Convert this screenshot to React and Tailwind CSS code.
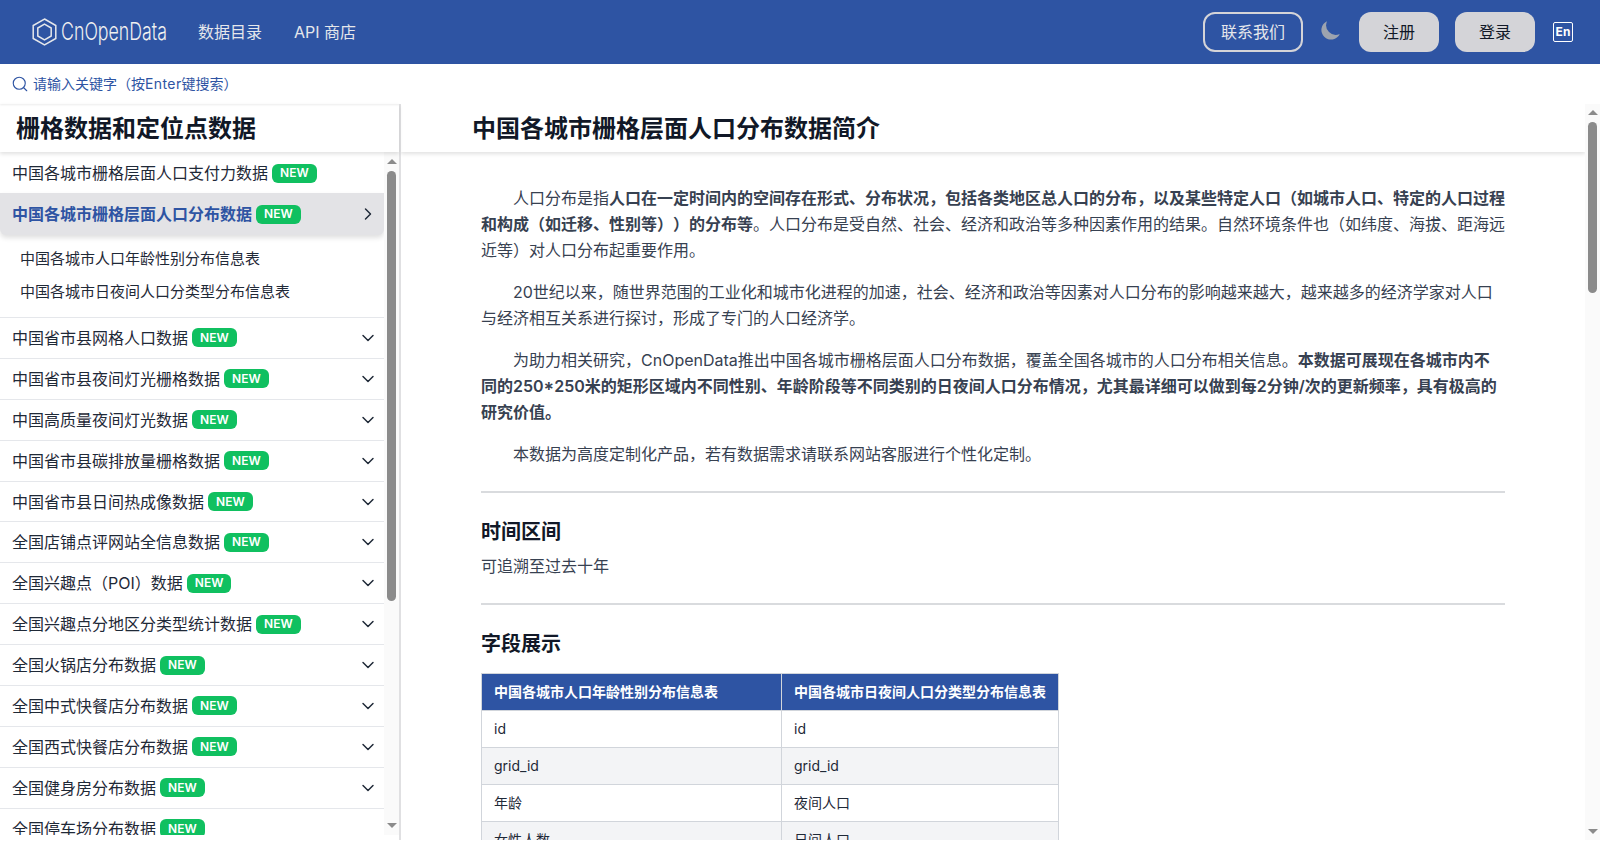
import React from "react";
import { ChevronDown, ChevronRight, Search } from "lucide-react";

const FONT = 'font-["Inter","Noto_Sans_CJK_SC",sans-serif]';

function New() {
  return (
    <span className="ml-1 inline-flex h-[19px] items-center rounded-md bg-[#10c060] px-2 text-xs font-semibold leading-none text-white">
      NEW
    </span>
  );
}

const rows = [
  "中国省市县网格人口数据",
  "中国省市县夜间灯光栅格数据",
  "中国高质量夜间灯光数据",
  "中国省市县碳排放量栅格数据",
  "中国省市县日间热成像数据",
  "全国店铺点评网站全信息数据",
  "全国兴趣点（POI）数据",
  "全国兴趣点分地区分类型统计数据",
  "全国火锅店分布数据",
  "全国中式快餐店分布数据",
  "全国西式快餐店分布数据",
  "全国健身房分布数据",
];

function Row({ label, chevron = true }) {
  return (
    <div className="flex h-[40.9px] shrink-0 items-center justify-between border-b border-[#e5e7eb] pl-3 pr-[6px] text-[#1f2937]">
      <span className="flex items-center">
        {label}
        <New />
      </span>
      {chevron && <ChevronDown size={20} strokeWidth={1.75} className="text-[#1f2937]" />}
    </div>
  );
}

function Arrow({ down }) {
  return (
    <svg width="10" height="5" viewBox="0 0 10 5" fill="#8b8b8b" className="shrink-0">
      <path d={down ? "M0 0h10L5 5Z" : "M5 0 10 5H0Z"} />
    </svg>
  );
}

function Scrollbar({ thumb, top, bottom }) {
  return (
    <div className={`flex w-[15px] shrink-0 flex-col items-center bg-[#fafafa] ${top}`}>
      <Arrow />
      <div className={`mt-[7px] w-[9px] rounded-full bg-[#8b8b8b] ${thumb}`} />
      <div className={`mt-auto ${bottom}`}>
        <Arrow down />
      </div>
    </div>
  );
}

function Sidebar() {
  return (
    <aside className="flex w-[401px] shrink-0 flex-col border-r-2 border-[#e0e0e2]">
      <div className="z-10 flex h-[48px] shrink-0 items-center pl-4 pt-[2px] text-2xl font-bold text-[#111827] shadow-[0_2px_4px_rgba(0,0,0,0.12)]">
        栅格数据和定位点数据
      </div>
      <div className="flex h-[683px] shrink-0">
        <div className="min-w-0 flex-1 overflow-hidden pt-[1px] text-base">
          <div className="flex h-[40px] items-center pl-3 text-[#1f2937]">
            <span className="flex items-center">
              中国各城市栅格层面人口支付力数据
              <New />
            </span>
          </div>
          <div className="flex h-[42px] items-center justify-between rounded-b-md bg-[#e3e3e6] pl-3 pr-[6px] font-semibold text-[#2e54a3] shadow-[0_3px_5px_rgba(0,0,0,0.12)]">
            <span className="flex items-center">
              中国各城市栅格层面人口分布数据
              <New />
            </span>
            <ChevronRight size={20} strokeWidth={1.75} className="text-[#1f2937]" />
          </div>
          <div className="border-b border-[#e5e7eb] pb-[9px] pl-5 pt-2 text-[15px] text-[#1f2937]">
            <div className="flex h-[32px] items-center">中国各城市人口年龄性别分布信息表</div>
            <div className="mt-[1px] flex h-[32px] items-center">中国各城市日夜间人口分类型分布信息表</div>
          </div>
          {rows.map((r) => (
            <Row key={r} label={r} />
          ))}
          <Row label="全国停车场分布数据" chevron={false} />
        </div>
        <Scrollbar top="pt-[7px]" thumb="h-[430px]" bottom="mb-[7px]" />
      </div>
    </aside>
  );
}

const tableRows = [
  ["id", "id"],
  ["grid_id", "grid_id"],
  ["年龄", "夜间人口"],
  ["女性人数", "日间人口"],
];

function Main() {
  return (
    <main className="flex min-w-0 flex-1">
      <div className="min-w-0 flex-1 overflow-hidden">
        <div className="z-10 flex h-[48px] items-center bg-white pl-[71px] pt-[2px] text-2xl font-bold text-[#111827] shadow-[0_2px_4px_rgba(0,0,0,0.12)]">
          中国各城市栅格层面人口分布数据简介
        </div>
        <article className="mx-auto w-[1024px] pt-[33px] text-base leading-[26px] text-[#374151]">
          <p className="mb-4 mr-[-2px] indent-8">
            人口分布是指<b className="font-semibold">人口在一定时间内的空间存在形式、分布状况，包括各类地区总人口的分布，以及某些特定人口（如城市人口、特定的人口过程和构成（如迁移、性别等））的分布等</b>。人口分布是受自然、社会、经济和政治等多种因素作用的结果。自然环境条件也（如纬度、海拔、距海远近等）对人口分布起重要作用。
          </p>
          <p className="mb-4 indent-8">
            20世纪以来，随世界范围的工业化和城市化进程的加速，社会、经济和政治等因素对人口分布的影响越来越大，越来越多的经济学家对人口与经济相互关系进行探讨，形成了专门的人口经济学。
          </p>
          <p className="mb-4 indent-8">
            为助力相关研究，CnOpenData推出中国各城市栅格层面人口分布数据，覆盖全国各城市的人口分布相关信息。<b className="font-semibold">本数据可展现在各城市内不同的250*250米的矩形区域内不同性别、年龄阶段等不同类别的日夜间人口分布情况，尤其最详细可以做到每2分钟/次的更新频率，具有极高的研究价值。</b>
          </p>
          <p className="mb-4 indent-8">本数据为高度定制化产品，若有数据需求请联系网站客服进行个性化定制。</p>
          <hr className="mt-6 border-t-2 border-[#d9dbde]" />
          <h3 className="mt-[25px] text-xl font-semibold leading-7 text-[#111827]">时间区间</h3>
          <p className="mt-[7px]">可追溯至过去十年</p>
          <hr className="mt-6 border-t-2 border-[#d9dbde]" />
          <h3 className="mt-[25px] text-xl font-semibold leading-7 text-[#111827]">字段展示</h3>
          <table className="mt-[15px] border-collapse text-sm leading-5">
            <thead>
              <tr className="bg-[#2e54a3] text-left font-bold text-white">
                <th className="h-[37px] w-[300px] border border-[#d1d5db] px-3">中国各城市人口年龄性别分布信息表</th>
                <th className="h-[37px] border border-[#d1d5db] px-3">中国各城市日夜间人口分类型分布信息表</th>
              </tr>
            </thead>
            <tbody>
              {tableRows.map(([a, b], i) => (
                <tr key={a} className={i % 2 === 1 ? "bg-[#f3f4f6]" : "bg-white"}>
                  <td className="h-[37px] border border-[#d1d5db] px-3 text-[#1f2937]">{a}</td>
                  <td className="h-[37px] border border-[#d1d5db] px-3 text-[#1f2937]">{b}</td>
                </tr>
              ))}
            </tbody>
          </table>
        </article>
      </div>
      <Scrollbar top="pt-[6px]" thumb="h-[171px]" bottom="mb-[6px]" />
    </main>
  );
}

export default function App() {
  return (
    <div className={`flex h-[840px] flex-col overflow-hidden bg-white [text-spacing-trim:space-all] ${FONT}`}>
      <header className="flex h-16 shrink-0 items-center bg-[#2e54a3] pl-8 pr-[27px] text-white">
        <svg width="25" height="28" viewBox="0 0 25 28" fill="none" stroke="#e5e7eb" strokeWidth="1.5" className="shrink-0">
          <path d="M12.5 1 23.8 7.5v13L12.5 27 1.2 20.5v-13Z" />
          <path d="M12.5 6.2 19.2 10v8l-6.7 3.8L5.8 18v-8Z" />
        </svg>
        <span className="ml-[4px] w-[107px] origin-left scale-x-[0.74] whitespace-nowrap text-2xl font-light leading-none text-[#f0f0f0]">CnOpenData</span>
        <nav className="ml-[30px] flex gap-8 text-base text-[#e5e7eb]">
          <span>数据目录</span>
          <span>API 商店</span>
        </nav>
        <div className="ml-auto flex items-center">
          <button className="h-10 w-[100px] rounded-xl border-2 border-[#d4d4d8] text-base text-[#e5e7eb]">联系我们</button>
          <svg width="24" height="24" viewBox="0 0 20 20" fill="#9ca3af" className="-mt-1 ml-4">
            <path d="M17.293 13.293A8 8 0 016.707 2.707a8.001 8.001 0 1010.586 10.586z" />
          </svg>
          <button className="ml-4 h-10 w-20 rounded-xl bg-[#d4d4d8] text-base text-[#111827]">注册</button>
          <button className="ml-4 h-10 w-20 rounded-xl bg-[#d4d4d8] text-base text-[#111827]">登录</button>
          <span className="ml-[18px] flex h-5 w-5 items-center justify-center rounded-[2px] border border-white text-xs font-bold leading-none text-white">En</span>
        </div>
      </header>
      <div className="flex h-10 shrink-0 items-center pl-[11px] text-sm text-[#2e54a3] shadow-[0_1px_2px_rgba(0,0,0,0.08)]">
        <Search size={18} strokeWidth={1.5} className="mr-1" />
        <span>请输入关键字（按<span className="tracking-[0.4px]">Enter</span>键搜索）</span>
      </div>
      <div className="flex min-h-0 flex-1">
        <Sidebar />
        <Main />
      </div>
    </div>
  );
}
